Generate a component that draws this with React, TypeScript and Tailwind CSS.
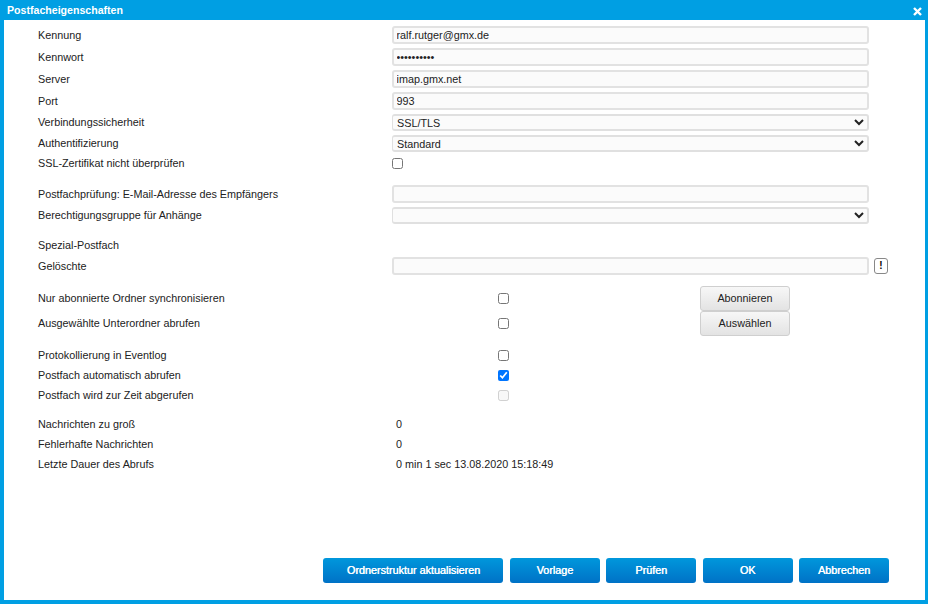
import type { ReactNode } from "react";

const font = "font-['Liberation_Sans',Arial,sans-serif]";
const fieldClass =
  "w-[477px] h-[18px] rounded-[3px] border-2 border-[#e2e2e2] bg-[#fbfbfb] pl-[2.5px] text-[10.8px] text-[#222] outline-none";
const selectClass =
  "w-[477px] h-[17px] rounded-[3px] border-2 border-l border-[#e0e0e0] bg-[#fbfbfb] text-[10.8px] text-[#222] outline-none";
const checkClass = "m-0 h-[11px] w-[11px]";

function Row({ label, className, children }: { label: string; className: string; children?: ReactNode }) {
  return (
    <div className={`flex items-center ${className}`}>
      <div className="w-[354px] shrink-0">{label}</div>
      {children}
    </div>
  );
}

function SyncRow({ label, className, checked, disabled, action }: {
  label: string;
  className: string;
  checked?: boolean;
  disabled?: boolean;
  action?: string;
}) {
  return (
    <div className={`flex items-center ${className}`}>
      <div className="w-[460px] shrink-0">{label}</div>
      <input type="checkbox" defaultChecked={checked} disabled={disabled} className={checkClass} />
      {action && (
        <button className="ml-[191px] h-[25px] w-[90px] rounded-[3px] border border-[#cfcfcf] bg-gradient-to-b from-[#f7f7f7] to-[#e3e3e3] text-[10.8px] text-[#222]">
          {action}
        </button>
      )}
    </div>
  );
}

function FooterButton({ label, width }: { label: string; width: string }) {
  return (
    <button className={`h-[25px] ${width} rounded-[3px] bg-gradient-to-b from-[#0097dc] to-[#0072c6] text-[10.8px] text-white [text-shadow:0.4px_0_0_#fff]`}>
      {label}
    </button>
  );
}

export default function App() {
  return (
    <div className={`flex h-[604px] w-[928px] flex-col bg-[#009fe3] text-[10.8px] text-[#222] ${font}`}>
      <header className="flex h-5 shrink-0 items-center justify-between pl-[7px] pr-[6px] pt-[2px] text-[10.6px] font-bold text-white">
        <span>Postfacheigenschaften</span>
        <svg width="9" height="9" viewBox="0 0 9 9">
          <path d="M1 1l7 7M8 1L1 8" stroke="#fff" strokeWidth="2.4" />
        </svg>
      </header>

      <main className="mb-1 ml-1 mr-[3px] flex flex-1 flex-col justify-between bg-white pb-[17px] pl-[34px] pt-[6px]">
        <form>
          <Row label="Kennung" className="h-[22px] pb-1">
            <input className={fieldClass} defaultValue="ralf.rutger@gmx.de" />
          </Row>
          <Row label="Kennwort" className="h-[22px] pb-1">
            <input type="password" className={fieldClass} defaultValue="ralfrutger" />
          </Row>
          <Row label="Server" className="h-[22px] pb-1">
            <input className={fieldClass} defaultValue="imap.gmx.net" />
          </Row>
          <Row label="Port" className="h-[22px] pb-1">
            <input className={fieldClass} defaultValue="993" />
          </Row>
          <Row label="Verbindungssicherheit" className="h-[21px] pb-1">
            <select className={selectClass} defaultValue="SSL/TLS">
              <option>SSL/TLS</option>
            </select>
          </Row>
          <Row label="Authentifizierung" className="h-[21px] pb-1">
            <select className={selectClass} defaultValue="Standard">
              <option>Standard</option>
            </select>
          </Row>
          <Row label="SSL-Zertifikat nicht überprüfen" className="h-[15px]">
            <input type="checkbox" className={checkClass} />
          </Row>

          <Row label="Postfachprüfung: E-Mail-Adresse des Empfängers" className="mt-[14px] h-[22px] pb-1">
            <input className={fieldClass} />
          </Row>
          <Row label="Berechtigungsgruppe für Anhänge" className="h-[21px] pb-1">
            <select className={selectClass}>
              <option></option>
            </select>
          </Row>

          <Row label="Spezial-Postfach" className="mt-[7px] h-[20px]" />
          <Row label="Gelöschte" className="mt-[2px] h-[18px]">
            <input className={fieldClass} />
            <button type="button" className="ml-[5px] flex h-4 w-[14px] items-center justify-center rounded-[3px] border border-[#888] bg-white text-[10px] font-bold leading-none text-black">
              !
            </button>
          </Row>

          <SyncRow label="Nur abonnierte Ordner synchronisieren" className="mt-[11px] h-[25px]" action="Abonnieren" />
          <SyncRow label="Ausgewählte Unterordner abrufen" className="h-[25px]" action="Auswählen" />

          <SyncRow label="Protokollierung in Eventlog" className="mt-[9px] h-5" />
          <SyncRow label="Postfach automatisch abrufen" className="h-5" checked />
          <SyncRow label="Postfach wird zur Zeit abgerufen" className="h-5" disabled />

          <Row label="Nachrichten zu groß" className="mt-[9px] h-5"><span className="pl-1">0</span></Row>
          <Row label="Fehlerhafte Nachrichten" className="h-5"><span className="pl-1">0</span></Row>
          <Row label="Letzte Dauer des Abrufs" className="h-5"><span className="pl-1">0 min 1 sec 13.08.2020 15:18:49</span></Row>
        </form>

        <footer className="flex justify-end gap-[6.4px] pr-9">
          <FooterButton label="Ordnerstruktur aktualisieren" width="w-[180px]" />
          <FooterButton label="Vorlage" width="w-[90px]" />
          <FooterButton label="Prüfen" width="w-[90px]" />
          <FooterButton label="OK" width="w-[90px]" />
          <FooterButton label="Abbrechen" width="w-[90px]" />
        </footer>
      </main>
    </div>
  );
}
